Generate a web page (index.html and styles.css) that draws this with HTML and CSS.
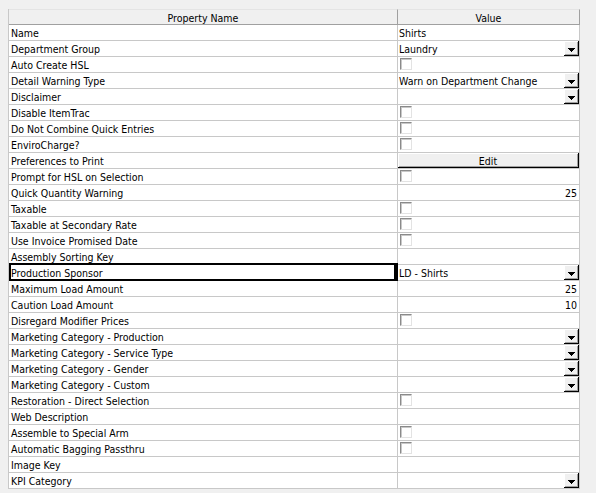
FILE: index.html
```html
<!DOCTYPE html>
<html>
<head>
<meta charset="utf-8">
<link rel="stylesheet" href="styles.css">
</head>
<body>
<div class="grid">
  <div class="row head"><div class="c1">Property Name</div><div class="c2">Value</div></div>
  <div class="row"><div class="c1">Name</div><div class="c2">Shirts</div></div>
  <div class="row"><div class="c1">Department Group</div><div class="c2 drop"><span>Laundry</span><span class="btn"><svg width="7" height="4" shape-rendering="crispEdges"><path d="M0 0h7v1H0zM1 1h5v1H1zM2 2h3v1H2zM3 3h1v1H3z"/></svg></span></div></div>
  <div class="row"><div class="c1">Auto Create HSL</div><div class="c2"><span class="chk"></span></div></div>
  <div class="row"><div class="c1">Detail Warning Type</div><div class="c2 drop"><span>Warn on Department Change</span><span class="btn"><svg width="7" height="4" shape-rendering="crispEdges"><path d="M0 0h7v1H0zM1 1h5v1H1zM2 2h3v1H2zM3 3h1v1H3z"/></svg></span></div></div>
  <div class="row"><div class="c1">Disclaimer</div><div class="c2 drop"><span></span><span class="btn"><svg width="7" height="4" shape-rendering="crispEdges"><path d="M0 0h7v1H0zM1 1h5v1H1zM2 2h3v1H2zM3 3h1v1H3z"/></svg></span></div></div>
  <div class="row"><div class="c1">Disable ItemTrac</div><div class="c2"><span class="chk"></span></div></div>
  <div class="row"><div class="c1">Do Not Combine Quick Entries</div><div class="c2"><span class="chk"></span></div></div>
  <div class="row"><div class="c1">EnviroCharge?</div><div class="c2"><span class="chk"></span></div></div>
  <div class="row"><div class="c1">Preferences to Print</div><div class="c2 edit"><span class="editbtn">Edit</span></div></div>
  <div class="row"><div class="c1">Prompt for HSL on Selection</div><div class="c2"><span class="chk"></span></div></div>
  <div class="row"><div class="c1">Quick Quantity Warning</div><div class="c2 num">25</div></div>
  <div class="row"><div class="c1">Taxable</div><div class="c2"><span class="chk"></span></div></div>
  <div class="row"><div class="c1">Taxable at Secondary Rate</div><div class="c2"><span class="chk"></span></div></div>
  <div class="row"><div class="c1">Use Invoice Promised Date</div><div class="c2"><span class="chk"></span></div></div>
  <div class="row"><div class="c1">Assembly Sorting Key</div><div class="c2"></div></div>
  <div class="row"><div class="c1 sel">Production Sponsor</div><div class="c2 drop"><span>LD - Shirts</span><span class="btn"><svg width="7" height="4" shape-rendering="crispEdges"><path d="M0 0h7v1H0zM1 1h5v1H1zM2 2h3v1H2zM3 3h1v1H3z"/></svg></span></div></div>
  <div class="row"><div class="c1">Maximum Load Amount</div><div class="c2 num">25</div></div>
  <div class="row"><div class="c1">Caution Load Amount</div><div class="c2 num">10</div></div>
  <div class="row"><div class="c1">Disregard Modifier Prices</div><div class="c2"><span class="chk"></span></div></div>
  <div class="row"><div class="c1">Marketing Category - Production</div><div class="c2 drop"><span></span><span class="btn"><svg width="7" height="4" shape-rendering="crispEdges"><path d="M0 0h7v1H0zM1 1h5v1H1zM2 2h3v1H2zM3 3h1v1H3z"/></svg></span></div></div>
  <div class="row"><div class="c1">Marketing Category - Service Type</div><div class="c2 drop"><span></span><span class="btn"><svg width="7" height="4" shape-rendering="crispEdges"><path d="M0 0h7v1H0zM1 1h5v1H1zM2 2h3v1H2zM3 3h1v1H3z"/></svg></span></div></div>
  <div class="row"><div class="c1">Marketing Category - Gender</div><div class="c2 drop"><span></span><span class="btn"><svg width="7" height="4" shape-rendering="crispEdges"><path d="M0 0h7v1H0zM1 1h5v1H1zM2 2h3v1H2zM3 3h1v1H3z"/></svg></span></div></div>
  <div class="row"><div class="c1">Marketing Category - Custom</div><div class="c2 drop"><span></span><span class="btn"><svg width="7" height="4" shape-rendering="crispEdges"><path d="M0 0h7v1H0zM1 1h5v1H1zM2 2h3v1H2zM3 3h1v1H3z"/></svg></span></div></div>
  <div class="row"><div class="c1">Restoration - Direct Selection</div><div class="c2"><span class="chk"></span></div></div>
  <div class="row"><div class="c1">Web Description</div><div class="c2"></div></div>
  <div class="row"><div class="c1">Assemble to Special Arm</div><div class="c2"><span class="chk"></span></div></div>
  <div class="row"><div class="c1">Automatic Bagging Passthru</div><div class="c2"><span class="chk"></span></div></div>
  <div class="row"><div class="c1">Image Key</div><div class="c2"></div></div>
  <div class="row"><div class="c1">KPI Category</div><div class="c2 drop"><span></span><span class="btn"><svg width="7" height="4" shape-rendering="crispEdges"><path d="M0 0h7v1H0zM1 1h5v1H1zM2 2h3v1H2zM3 3h1v1H3z"/></svg></span></div></div>
</div>
</body>
</html>
```
FILE: styles.css
```css
html, body {
  margin: 0;
  padding: 0;
  background: #f0f0f0;
}
body {
  font-family: "DejaVu Sans Condensed", "DejaVu Sans", "Liberation Sans", sans-serif;
  font-size: 10.5px;
  color: #000;
}
.grid {
  margin: 9px 0 0 8px;
  width: 572px;
  background: #fff;
  border-left: 1px solid #c8c8c8;
  box-sizing: border-box;
}
.row {
  display: grid;
  grid-template-columns: 389px 182px;
  height: 16px;
}
.c1, .c2 {
  position: relative;
  height: 15px;
  line-height: 17px;
  border-right: 1px solid #c8c8c8;
  border-bottom: 1px solid #c8c8c8;
  white-space: nowrap;
  overflow: hidden;
}
.c1 { padding-left: 2px; }
.c2 { padding-left: 1px; display: flex; align-items: flex-start; }
.head .c1, .head .c2 {
  background: #f0f0f0;
  text-align: center;
  justify-content: center;
  padding: 0;
  height: 14px;
  line-height: 16px;
  border-top: 1px solid #e4e4e4;
  border-bottom-color: #a0a0a0;
  border-right-color: #a0a0a0;
}
.head { background: #f0f0f0; }
.drop { justify-content: space-between; }
.btn {
  width: 14px;
  height: 14px;
  background: #f0f0f0;
  border-right: 1px solid #000;
  border-bottom: 1px solid #000;
  box-shadow: inset 1px 1px 0 #fff, inset -1px -1px 0 #a0a0a0;
  display: flex;
  justify-content: center;
  align-items: flex-start;
}
.btn svg { margin-top: 7px; margin-left: 1px; }
.chk {
  width: 10px;
  height: 10px;
  margin: 1px 0 0 1px;
  background: #fff;
  border-top: 1px solid #8a8a8a;
  border-left: 1px solid #8a8a8a;
  border-right: 1px solid #e3e3e3;
  border-bottom: 1px solid #e3e3e3;
  box-shadow: inset 1px 1px 0 #c8c8c8;
}
.num { justify-content: flex-end; padding-right: 2px; }
.edit { padding: 0; }
.editbtn {
  flex: 1;
  height: 14px;
  line-height: 16px;
  text-align: center;
  background: #f0f0f0;
  border-right: 1px solid #000;
  border-bottom: 1px solid #000;
  box-shadow: inset 1px 1px 0 #fff, inset -1px -1px 0 #a0a0a0;
}
.sel { overflow: visible; }
.sel::after {
  content: "";
  position: absolute;
  left: 0;
  top: -2px;
  right: -1px;
  bottom: -1px;
  border: 2px solid #000;
  border-right-width: 4px;
}
```
